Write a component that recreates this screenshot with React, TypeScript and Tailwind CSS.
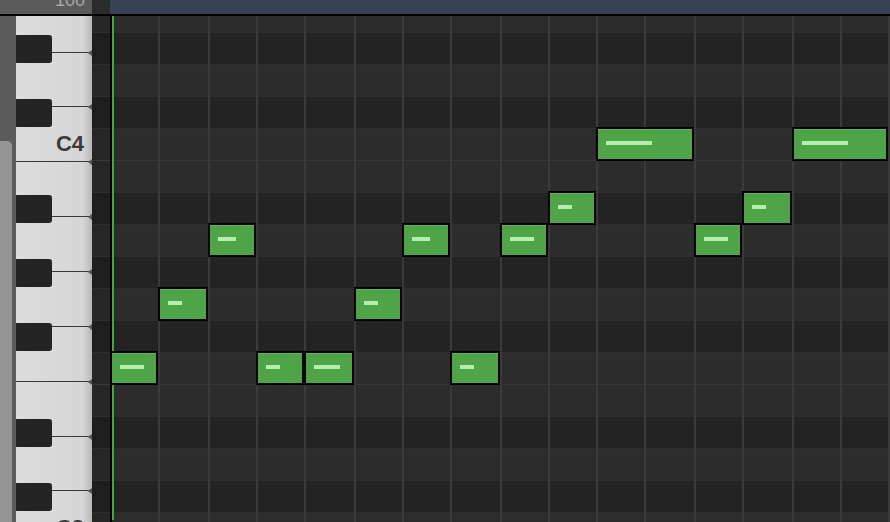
import React from "react";

// piano roll, rows are 32px per semitone, first visible row (E4) is cut by the header
type Row = { h: number | null; white: boolean; after?: boolean };

const ROWS: Row[] = [
  { h: 16, white: true }, // E4
  { h: 32, white: false }, // D#4
  { h: 32, white: true }, // D4
  { h: 32, white: false }, // C#4
  { h: 32, white: true }, // C4
  { h: 32, white: true, after: true }, // B3
  { h: 32, white: false }, // A#3
  { h: 32, white: true }, // A3
  { h: 32, white: false }, // G#3
  { h: 32, white: true }, // G3
  { h: 32, white: false }, // F#3
  { h: 32, white: true }, // F3
  { h: 32, white: true, after: true }, // E3
  { h: 32, white: false }, // D#3
  { h: 32, white: true }, // D3
  { h: 32, white: false }, // C#3
  { h: null, white: true }, // C3
];

const COLS = [110, 158, 208, 256, 304, 354, 402, 450, 500, 548, 596, 644, 694, 742, 792, 840, 888];

const NOTES = [
  { col: 0, row: 352, span: 1, bar: 24 },
  { col: 1, row: 288, span: 1, bar: 14 },
  { col: 2, row: 224, span: 1, bar: 18 },
  { col: 3, row: 352, span: 1, bar: 14 },
  { col: 4, row: 352, span: 1, bar: 26 },
  { col: 5, row: 288, span: 1, bar: 14 },
  { col: 6, row: 224, span: 1, bar: 18 },
  { col: 7, row: 352, span: 1, bar: 14 },
  { col: 8, row: 224, span: 1, bar: 24 },
  { col: 9, row: 192, span: 1, bar: 14 },
  { col: 10, row: 128, span: 2, bar: 46 },
  { col: 12, row: 224, span: 1, bar: 24 },
  { col: 13, row: 192, span: 1, bar: 14 },
  { col: 14, row: 128, span: 2, bar: 46 },
];

// white keys: first one is cut by the header, then 7 keys per 384px octave
const WHITE_KEYS = [
  { h: 36.6, label: "" },
  { h: 54.857, label: "" },
  { h: 54.857, label: "C4" },
  { h: 54.857, label: "" },
  { h: 54.857, label: "" },
  { h: 54.857, label: "" },
  { h: 54.857, label: "" },
  { h: 54.857, label: "" },
  { h: 54.857, label: "" },
  { h: 54.857, label: "C3" },
];

const BLACK_KEYS = [19, 83, 179, 243, 307, 403, 467];

const RowBands = ({ light, dark }: { light: string; dark: string }) => (
  <div className="flex flex-col h-full">
    {ROWS.map((r, i) => (
      <div
        key={i}
        className={`box-border shrink-0 ${r.h === null ? "flex-1" : ""} ${
          r.after ? "border-t border-[#383838]" : i > 0 ? "border-t border-[#2f2f2f]" : ""
        }`}
        style={{
          height: r.h === null ? undefined : r.h,
          backgroundColor: r.white ? light : dark,
        }}
      />
    ))}
  </div>
);

const Piano = () => (
  <div className="relative w-[76px] h-full overflow-hidden bg-linear-to-r from-[#dcdcdc] via-[#d6d6d6] via-[88%] to-[#b8b8b8]">
    <div className="flex flex-col">
      {WHITE_KEYS.map((k, i) => (
        <div
          key={i}
          className="relative box-border shrink-0 flex items-end justify-end pr-[8px] pb-[6px] border-b border-[#3a3a3a]"
          style={{ height: k.h }}
        >
          {k.label && (
            <span className="text-[22px] leading-none font-bold text-[#3b3b3b]">
              {k.label}
            </span>
          )}
          <div className="absolute right-0 -bottom-[4px] w-0 h-0 border-y-[3px] border-y-transparent border-r-[4px] border-r-[#555555]" />
        </div>
      ))}
    </div>
    {BLACK_KEYS.map((t) => (
      <div
        key={t}
        className="absolute left-0 w-[36px] h-[28px] bg-[#242424] rounded-r-[3px]"
        style={{ top: t }}
      />
    ))}
  </div>
);

const Grid = () => (
  <div className="relative flex-1 h-full overflow-hidden">
    <RowBands light="#2c2c2c" dark="#232323" />
    <div className="absolute inset-0 flex">
      {COLS.slice(0, -1).map((c, i) => (
        <div
          key={c}
          className={`h-full box-border shrink-0 ${i > 0 ? "border-l-2 border-[#3a3a3a]" : ""}`}
          style={{ width: COLS[i + 1] - c }}
        />
      ))}
      <div className="h-full flex-1 box-border border-l-2 border-[#3a3a3a]" />
    </div>
    <div className="absolute left-0 top-0 bottom-0 w-[2px] bg-black" />
    <div className="absolute left-[2px] top-0 bottom-[2px] w-[2px] bg-[#47a640]" />
    {NOTES.map((n, i) => (
      <div
        key={i}
        className="absolute box-border border-2 border-black bg-[#4fa447] pl-[8px] pt-[12px] shadow-[inset_0_1px_0_#5db655]"
        style={{
          left: COLS[n.col] - 110,
          width: COLS[n.col + n.span] - COLS[n.col],
          top: n.row - 1 - 16,
          height: 34,
        }}
      >
        <div className="h-[4px] bg-[#b6eeae]" style={{ width: n.bar }} />
      </div>
    ))}
  </div>
);

export default function App() {
  return (
    <div
      className="w-[890px] h-[522px] flex flex-col overflow-hidden bg-[#232323]"
      style={{ fontFamily: '"Liberation Sans", Arial, sans-serif' }}
    >
      <div className="h-[14px] flex shrink-0">
        <div className="w-[92px] bg-[#5b5b5b] flex justify-end items-start pr-[7px] overflow-hidden">
          <span className="text-[18px] leading-none text-[#a7a7a7] -mt-[9px]">100</span>
        </div>
        <div className="w-[18px] bg-[#2b2b2b]" />
        <div className="flex-1 bg-[#374255]" />
      </div>
      <div className="h-[2px] bg-black shrink-0" />
      <div className="flex-1 flex min-h-0">
        <div className="w-[16px] bg-[#5b5b5b] flex flex-col pt-[125px]">
          <div className="w-[12px] flex-1 bg-[#959595] rounded-tr-[5px]" />
        </div>
        <Piano />
        <div className="w-[18px] h-full">
          <RowBands light="#262626" dark="#1e1e1e" />
        </div>
        <Grid />
      </div>
    </div>
  );
}
